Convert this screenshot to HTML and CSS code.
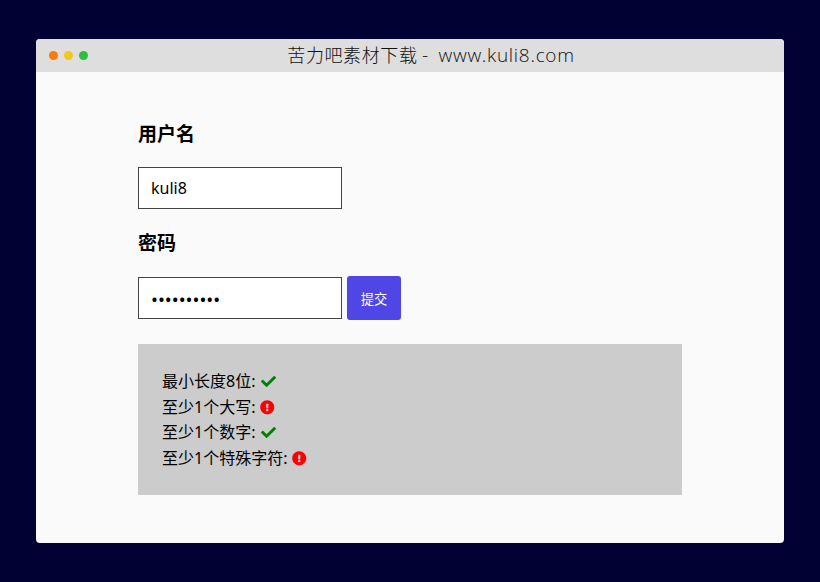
FILE: index.html
```html
<!DOCTYPE html>
<html lang="zh-CN">
<head>
    <meta charset="UTF-8">
    <meta name="viewport" content="width=device-width, initial-scale=1.0">
    <title>苦力吧素材下载</title>
    <link rel="stylesheet" href="styles.css">
</head>
<body>
    <div class="window">
        <div class="titlebar">
            <div class="dots">
                <span class="dot orange"></span>
                <span class="dot yellow"></span>
                <span class="dot green"></span>
            </div>
            <div class="title">苦力吧素材下载 <span class="title-latin">- www.kuli8.com</span></div>
        </div>

        <form class="content" onsubmit="return false">
            <label class="label" for="username">用户名</label>
            <input class="input" id="username" type="text" value="kuli8">

            <label class="label" for="password">密码</label>
            <div class="password-row">
                <input class="input password" id="password" type="password" value="kuli8kuli8">
                <button class="btn">提交</button>
            </div>

            <div class="rules">
                <div class="rule">最小长度8位:
                    <svg class="icon ok" viewBox="0 0 512 512"><path d="M173.9 439.4 7.5 273c-10-10-10-26.200 0-36.200l36.200-36.200c10-10 26.200-10 36.200 0L192 312.700 432.100 72.600c10-10 26.200-10 36.200 0l36.200 36.200c10 10 10 26.200 0 36.200L210.100 439.400c-10 10-26.200 10-36.200 0z"/></svg>
                </div>
                <div class="rule">至少1个大写:
                    <svg class="icon bad" viewBox="0 0 512 512"><path d="M504 256c0 137-111 248-248 248S8 393 8 256 119 8 256 8s248 111 248 248zm-248 50c-25.400 0-46 20.600-46 46s20.600 46 46 46 46-20.600 46-46-20.600-46-46-46zm-43.700-165.300 7.400 136c.3 6.400 5.600 11.300 12 11.300h48.600c6.400 0 11.700-5 12-11.300l7.400-136c.4-6.900-5.100-12.700-12-12.700h-63.400c-6.900 0-12.400 5.800-12 12.700z"/></svg>
                </div>
                <div class="rule">至少1个数字:
                    <svg class="icon ok" viewBox="0 0 512 512"><path d="M173.9 439.4 7.5 273c-10-10-10-26.200 0-36.200l36.200-36.200c10-10 26.200-10 36.200 0L192 312.700 432.100 72.600c10-10 26.200-10 36.200 0l36.200 36.200c10 10 10 26.200 0 36.200L210.100 439.400c-10 10-26.200 10-36.200 0z"/></svg>
                </div>
                <div class="rule">至少1个特殊字符:
                    <svg class="icon bad" viewBox="0 0 512 512"><path d="M504 256c0 137-111 248-248 248S8 393 8 256 119 8 256 8s248 111 248 248zm-248 50c-25.400 0-46 20.600-46 46s20.600 46 46 46 46-20.600 46-46-20.600-46-46-46zm-43.700-165.300 7.400 136c.3 6.400 5.600 11.300 12 11.300h48.600c6.400 0 11.700-5 12-11.300l7.400-136c.4-6.900-5.100-12.700-12-12.700h-63.400c-6.900 0-12.400 5.800-12 12.700z"/></svg>
                </div>
            </div>
        </form>
    </div>
</body>
</html>
```

FILE: styles.css
```css
* {
    margin: 0;
    padding: 0;
    box-sizing: border-box;
}

body {
    font-family: "Noto Sans", "Noto Sans CJK SC", sans-serif;
    background: #020133;
    color: #000;
    padding: 39px 36px;
    height: 582px;
    overflow: hidden;
}

.window {
    height: 504px;
    background: #fafafb;
    border-radius: 4px;
    overflow: hidden;
}

.titlebar {
    position: relative;
    height: 33px;
    background: #dedede;
    display: flex;
    align-items: center;
    justify-content: center;
    padding-left: 42px;
}

.dots {
    position: absolute;
    left: 12.500px;
    top: 12px;
    display: flex;
    gap: 6px;
}

.dot {
    width: 9px;
    height: 9px;
    border-radius: 50%;
}

.orange { background: #f97b0c; }
.yellow { background: #f2c81d; }
.green { background: #2dbe3b; }

.title {
    font-family: "Noto Sans CJK SC", sans-serif;
    font-weight: 300;
    font-size: 18px;
    line-height: 33px;
    letter-spacing: 0.6px;
    color: #111;
    padding-bottom: 2px;
    white-space: nowrap;
}

.title-latin {
    font-family: "Open Sans", sans-serif;
    font-weight: 300;
    font-size: 19px;
    letter-spacing: 0.7px;
    word-spacing: 4px;
    color: #111;
}

.content {
    padding: 48px 102px;
    display: flex;
    flex-direction: column;
    align-items: flex-start;
}

.label {
    font-size: 19px;
    font-weight: 700;
    line-height: 28px;
    margin-bottom: 19px;
}

.input {
    width: 204px;
    height: 42px;
    padding: 0 12px;
    border: 1px solid #444;
    background: #fff;
    font-family: inherit;
    font-size: 16px;
    color: #000;
    margin-bottom: 20px;
    outline: none;
}

.password {
    font-size: 18.400px;
}

.password-row {
    display: flex;
    align-items: center;
    gap: 5px;
    margin-bottom: 24px;
}

.password-row .input {
    margin-bottom: 0;
}

.btn {
    width: 54px;
    height: 44px;
    background: #4f46e5;
    color: #fff;
    border: none;
    border-radius: 3px;
    font-family: inherit;
    font-size: 13.300px;
    cursor: pointer;
}

.rules {
    width: 544px;
    padding: 25px 24px 24px;
    background: #ccc;
    font-size: 16px;
    line-height: 25.600px;
}

.rule {
    display: flex;
    align-items: center;
    gap: 5px;
    height: 25.600px;
}

.icon {
    fill: currentColor;
}

.ok {
    width: 15px;
    height: 15px;
    margin-left: 1px;
    color: #008000;
}

.bad {
    width: 14.500px;
    height: 14.500px;
    color: #f00;
}
```
